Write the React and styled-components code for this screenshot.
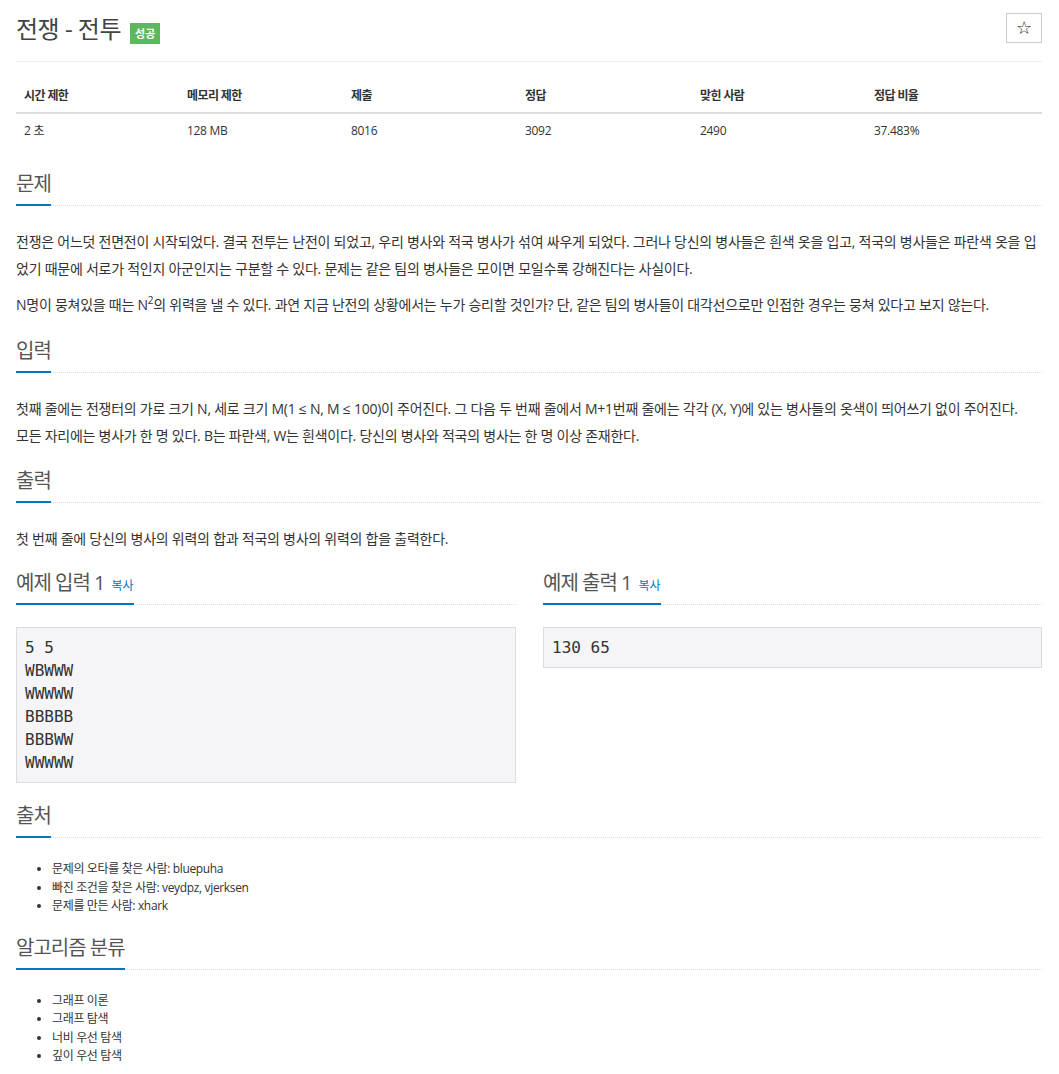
import React from "react";
import styled, { createGlobalStyle } from "styled-components";

const Global = createGlobalStyle`
  html, body { margin: 0; padding: 0; background: #fff; }
  body {
    font-family: "Open Sans", "Noto Sans CJK KR", sans-serif;
    color: #333;
    font-size: 14px;
  }
`;

const Page = styled.div`
  padding: 0 17px 40px 16px;
`;

const TitleBar = styled.div`
  display: flex;
  justify-content: space-between;
  align-items: flex-start;
  padding-top: 12px;
  padding-bottom: 15px;
  border-bottom: 1px solid #eee;
`;

const Title = styled.h1`
  margin: 0;
  font-size: 24px;
  line-height: 34px;
  font-weight: 400;
  color: #444;
  letter-spacing: -0.5px;
  display: flex;
  align-items: baseline;
  gap: 9px;
`;

const Badge = styled.span`
  display: inline-block;
  background: #5cb85c;
  color: #fff;
  font-size: 11px;
  font-weight: 700;
  line-height: 13px;
  padding: 4px 5px;
  letter-spacing: 0;
`;

const StarButton = styled.button`
  width: 36px;
  height: 30px;
  margin-top: 1px;
  border: 1px solid #ccc;
  background: #fff;
  color: #222;
  font-size: 18px;
  line-height: 1;
  padding: 0;
  font-family: "DejaVu Sans", sans-serif;
  display: flex;
  align-items: center;
  justify-content: center;
`;

const Table = styled.table`
  width: 100%;
  border-collapse: collapse;
  margin-top: 17px;
  table-layout: fixed;
  font-size: 12px;
`;

const Th = styled.th`
  text-align: left;
  font-weight: 700;
  padding: 8px;
  line-height: 17px;
  border-bottom: 2px solid #ddd;
  color: #333;
  letter-spacing: -0.6px;
`;

const Td = styled.td`
  padding: 8px;
  line-height: 17px;
  color: #333;
  letter-spacing: -0.3px;
`;

const Headline = styled.div`
  margin-top: ${(p) => p.$top ?? 20}px;
  border-bottom: 1px dotted #ddd;
  margin-bottom: 22px;
`;

const H2 = styled.h2`
  display: inline-block;
  margin: 0 0 -1px;
  padding-bottom: 7px;
  border-bottom: 2px solid #0076c0;
  font-size: 20px;
  line-height: 26px;
  font-weight: 400;
  color: #555;
  letter-spacing: -1px;
`;

const CopyLink = styled.a`
  font-size: 12px;
  line-height: 1;
  color: #0076c0;
  margin-left: 7px;
  letter-spacing: 0;
  text-decoration: none;
`;

const Para = styled.p`
  margin: 0 0 9px;
  font-size: 14px;
  line-height: 27px;
  letter-spacing: -0.25px;
  word-break: ${(p) => (p.$keep ? "keep-all" : "normal")};
`;

const Sup = styled.sup`
  font-size: 10px;
  line-height: 0;
`;

const Samples = styled.div`
  display: grid;
  grid-template-columns: 500px 1fr;
  gap: 27px;
  align-items: start;
`;

const Pre = styled.pre`
  margin: 0;
  padding: 8px;
  background: #f5f5f7;
  border: 1px solid #ddd;
  font-family: "DejaVu Sans Mono", monospace;
  font-size: 16px;
  line-height: 23px;
  color: #333;
`;

const List = styled.ul`
  margin: 0;
  padding-left: 36px;
  font-size: 12px;
  line-height: 18.5px;
  letter-spacing: -0.35px;
`;

function Section({ title, top, link, children }) {
  return (
    <>
      <Headline $top={top}>
        <H2>
          {title}
          {link && <CopyLink href="#">복사</CopyLink>}
        </H2>
      </Headline>
      {children}
    </>
  );
}

export default function App() {
  const heads = ["시간 제한", "메모리 제한", "제출", "정답", "맞힌 사람", "정답 비율"];
  const vals = ["2 초", "128 MB", "8016", "3092", "2490", "37.483%"];
  const widths = [163, 164, 174, 175, 174, 176];
  return (
    <Page>
      <Global />
      <TitleBar>
        <Title>
          전쟁 - 전투<Badge>성공</Badge>
        </Title>
        <StarButton>☆</StarButton>
      </TitleBar>
      <Table>
        <colgroup>
          {widths.map((w, i) => (
            <col key={i} style={{ width: w }} />
          ))}
        </colgroup>
        <thead>
          <tr>
            {heads.map((h) => (
              <Th key={h}>{h}</Th>
            ))}
          </tr>
        </thead>
        <tbody>
          <tr>
            {vals.map((v) => (
              <Td key={v}>{v}</Td>
            ))}
          </tr>
        </tbody>
      </Table>

      <Section title="문제" top={24}>
        <Para>
          전쟁은 어느덧 전면전이 시작되었다. 결국 전투는 난전이 되었고, 우리 병사와 적국 병사가 섞여 싸우게 되었다. 그러나 당신의 병사들은 흰색 옷을 입고, 적국의 병사들은 파란색 옷을 입었기 때문에 서로가 적인지 아군인지는 구분할 수 있다. 문제는 같은 팀의 병사들은 모이면 모일수록 강해진다는 사실이다.
        </Para>
        <Para>
          N명이 뭉쳐있을 때는 N<Sup>2</Sup>의 위력을 낼 수 있다. 과연 지금 난전의 상황에서는 누가 승리할 것인가? 단, 같은 팀의 병사들이 대각선으로만 인접한 경우는 뭉쳐 있다고 보지 않는다.
        </Para>
      </Section>

      <Section title="입력">
        <Para $keep>
          첫째 줄에는 전쟁터의 가로 크기 N, 세로 크기 M(1 ≤ N, M ≤ 100)이 주어진다. 그 다음 두 번째 줄에서 M+1번째 줄에는 각각 (X, Y)에 있는 병사들의 옷색이 띄어쓰기 없이 주어진다. 모든 자리에는 병사가 한 명 있다. B는 파란색, W는 흰색이다. 당신의 병사와 적국의 병사는 한 명 이상 존재한다.
        </Para>
      </Section>

      <Section title="출력" top={19}>
        <Para>첫 번째 줄에 당신의 병사의 위력의 합과 적국의 병사의 위력의 합을 출력한다.</Para>
      </Section>

      <Samples>
        <div>
          <Section title="예제 입력 1" link top={9}>
            <Pre>{"5 5\nWBWWW\nWWWWW\nBBBBB\nBBBWW\nWWWWW"}</Pre>
          </Section>
        </div>
        <div>
          <Section title="예제 출력 1" link top={9}>
            <Pre>{"130 65"}</Pre>
          </Section>
        </div>
      </Samples>

      <Section title="출처">
        <List>
          <li>문제의 오타를 찾은 사람: bluepuha</li>
          <li>빠진 조건을 찾은 사람: veydpz, vjerksen</li>
          <li>문제를 만든 사람: xhark</li>
        </List>
      </Section>

      <Section title="알고리즘 분류" top={19}>
        <List>
          <li>그래프 이론</li>
          <li>그래프 탐색</li>
          <li>너비 우선 탐색</li>
          <li>깊이 우선 탐색</li>
        </List>
      </Section>
    </Page>
  );
}
